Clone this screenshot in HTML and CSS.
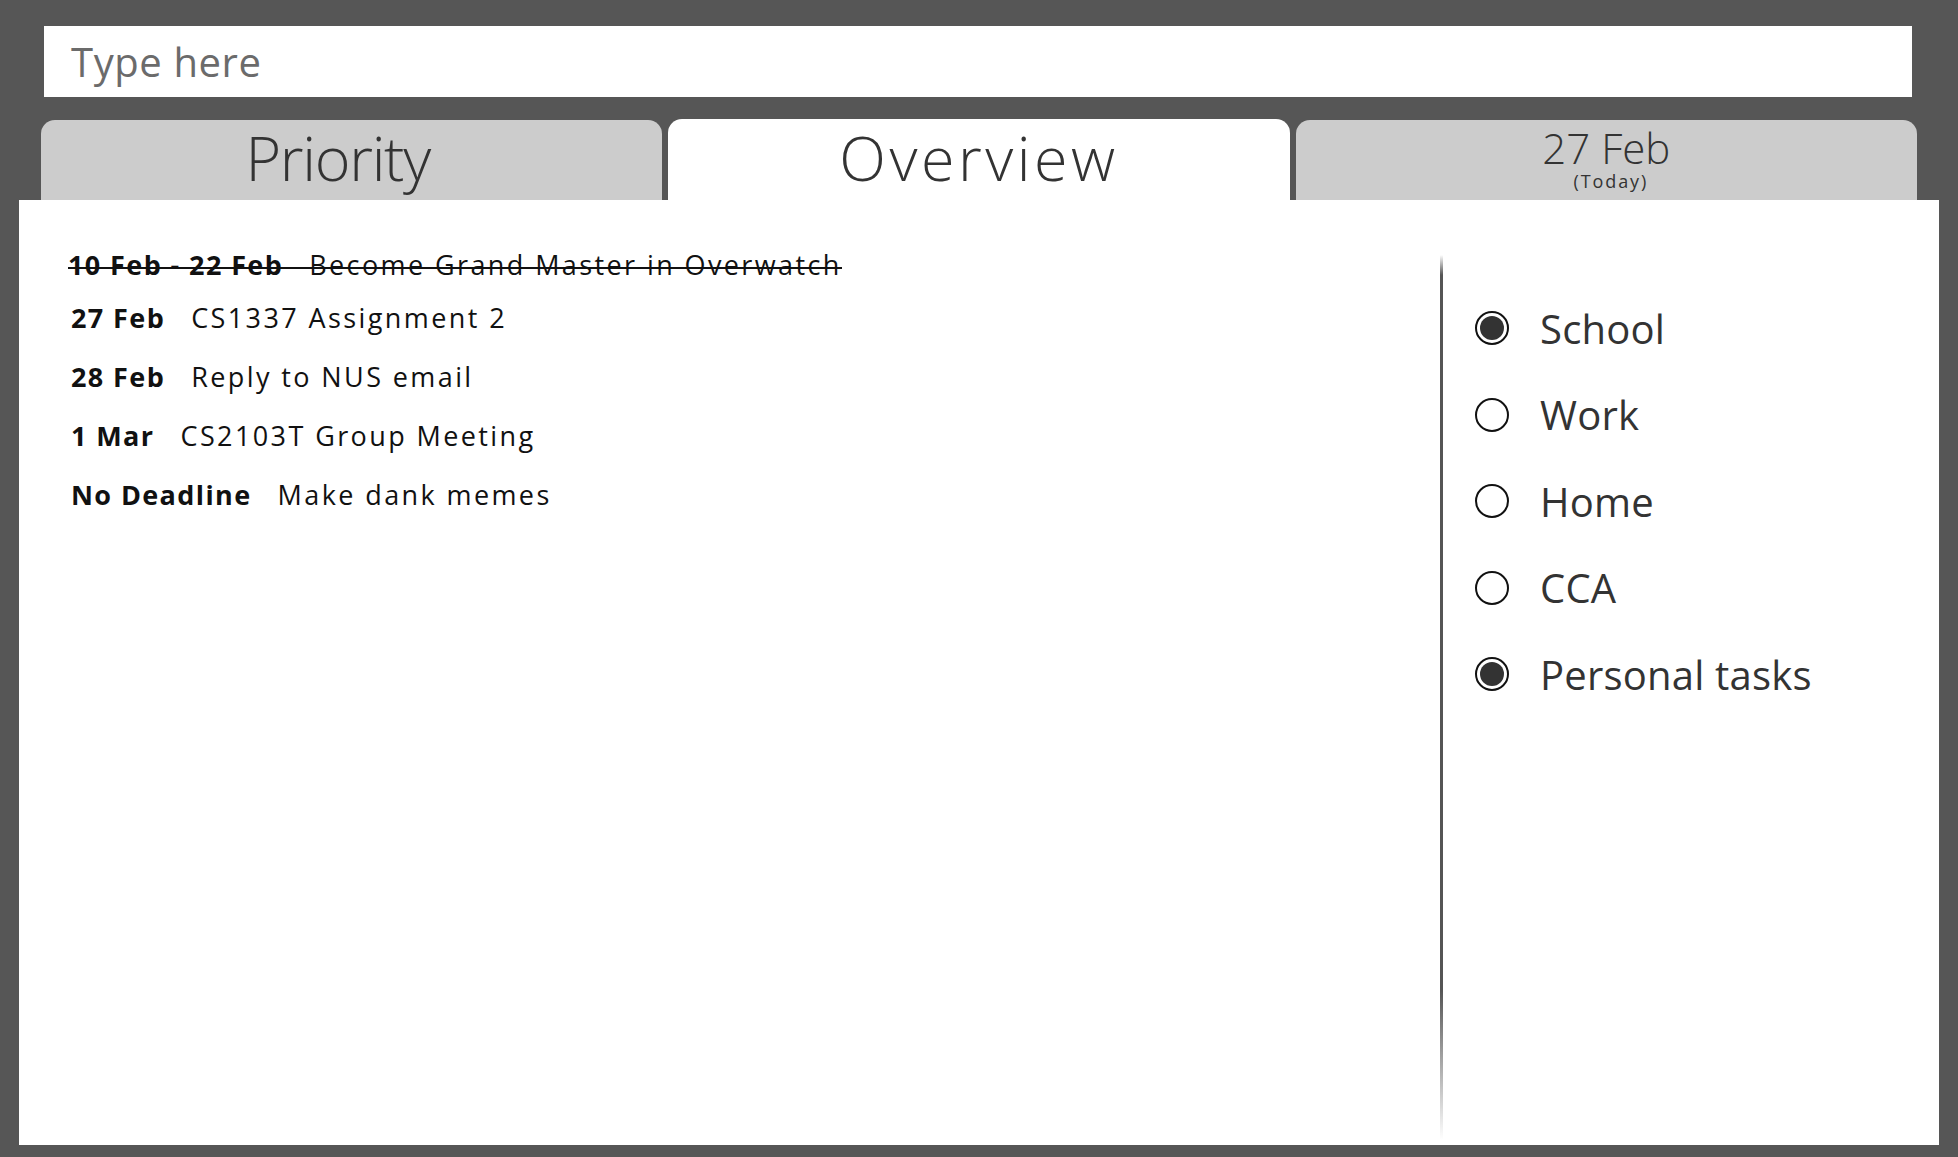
FILE: index.html
```html
<!DOCTYPE html>
<html lang="en">
<head>
<meta charset="utf-8">
<title>Tasks</title>
<link rel="stylesheet" href="styles.css">
</head>
<body>
<div class="app">
  <header class="top">
    <div class="search"><span class="placeholder">Type here</span></div>
  </header>
  <nav class="tabs">
    <div class="tab tab-priority"><span class="tab-label">Priority</span></div>
    <div class="tab tab-overview active"><span class="tab-label">Overview</span></div>
    <div class="tab tab-date">
      <span class="date-main">27 Feb</span>
      <span class="date-sub">(Today)</span>
    </div>
  </nav>
  <main class="panel">
    <section class="tasks">
      <div class="task done"><span class="task-date">10 Feb - 22 Feb</span><span class="task-name">Become Grand Master in Overwatch</span></div>
      <div class="task"><span class="task-date">27 Feb</span><span class="task-name">CS1337 Assignment 2</span></div>
      <div class="task"><span class="task-date">28 Feb</span><span class="task-name">Reply to NUS email</span></div>
      <div class="task"><span class="task-date">1 Mar</span><span class="task-name">CS2103T Group Meeting</span></div>
      <div class="task"><span class="task-date">No Deadline</span><span class="task-name">Make dank memes</span></div>
    </section>
    <div class="divider"></div>
    <aside class="filters">
      <div class="filter"><span class="radio checked"></span><span class="filter-label">School</span></div>
      <div class="filter"><span class="radio"></span><span class="filter-label">Work</span></div>
      <div class="filter"><span class="radio"></span><span class="filter-label">Home</span></div>
      <div class="filter"><span class="radio"></span><span class="filter-label">CCA</span></div>
      <div class="filter"><span class="radio checked"></span><span class="filter-label">Personal tasks</span></div>
    </aside>
  </main>
</div>
</body>
</html>
```
FILE: styles.css
```css
html, body {
  margin: 0;
  padding: 0;
}
body {
  background: #565656;
  font-family: "Open Sans", "Noto Sans", sans-serif;
  color: #333;
}
.app {
  height: 1157px;
  padding-top: 26px;
  box-sizing: border-box;
}
.top {
  padding: 0 41px;
}
.search {
  margin: 0 5px 0 3px;
  height: 71px;
  background: #fff;
  display: flex;
  align-items: center;
  padding-left: 27px;
}
.placeholder {
  font-size: 40px;
  color: #6b6b6b;
  letter-spacing: 0.6px;
  line-height: 1;
}
.tabs {
  display: grid;
  grid-template-columns: repeat(3, minmax(0, 1fr));
  align-items: end;
  column-gap: 6px;
  margin-top: 22px;
  padding: 0 41px;
}
.tab {
  height: 80px;
  background: #cccccc;
  border-radius: 14px 14px 0 0;
  display: flex;
  align-items: center;
  justify-content: center;
  box-sizing: border-box;
  padding-bottom: 5px;
  color: #333;
}
.tab.active {
  background: #fff;
  height: 81px;
}
.tab-label {
  font-size: 61px;
  font-weight: 300;
  line-height: 1;
}
.tab-priority {
  padding-right: 28px;
}
.tab-priority .tab-label {
  letter-spacing: -1.3px;
}
.tab-overview .tab-label {
  letter-spacing: 3.5px;
}
.tab-date {
  flex-direction: column;
  justify-content: flex-start;
  padding: 8px 0 0;
}
.date-main {
  font-size: 42px;
  font-weight: 300;
  line-height: 40px;
}
.date-sub {
  margin: 1.5px 0 0 9px;
  font-size: 18px;
  line-height: 22px;
  letter-spacing: 1.9px;
}
.panel {
  margin: 0 19px;
  height: 945px;
  background: #fff;
  display: flex;
}
.tasks {
  flex: 1;
  padding: 35px 0 0 52px;
  display: flex;
  flex-direction: column;
  align-items: flex-start;
}
.task {
  display: flex;
  gap: 26px;
  font-size: 27px;
  line-height: 59px;
  color: #111;
}
.task-date {
  font-weight: 700;
  letter-spacing: 1.4px;
}
.task-name {
  letter-spacing: 2.4px;
}
.task.done {
  margin: 0 0 -6px -3px;
  background: linear-gradient(#111, #111) no-repeat 0 32px / 100% 2px;
}
.divider {
  width: 3px;
  margin: 55px 0 5px;
  background: linear-gradient(to bottom, rgba(85, 85, 85, 0) 0, #555 20px, #555 83%, rgba(85, 85, 85, 0) 100%);
}
.filters {
  width: 496px;
  padding-top: 85px;
  box-sizing: border-box;
}
.filter {
  height: 86.5px;
  display: flex;
  align-items: center;
  gap: 31px;
  padding-left: 32px;
  font-size: 40px;
  letter-spacing: 0.2px;
  color: #333;
}
.radio {
  flex: none;
  width: 34px;
  height: 34px;
  box-sizing: border-box;
  border: 2px solid #111;
  border-radius: 50%;
  display: flex;
  align-items: center;
  justify-content: center;
  background: #fff;
}
.radio.checked::after {
  content: "";
  width: 24px;
  height: 24px;
  border-radius: 50%;
  background: #333;
}
```
